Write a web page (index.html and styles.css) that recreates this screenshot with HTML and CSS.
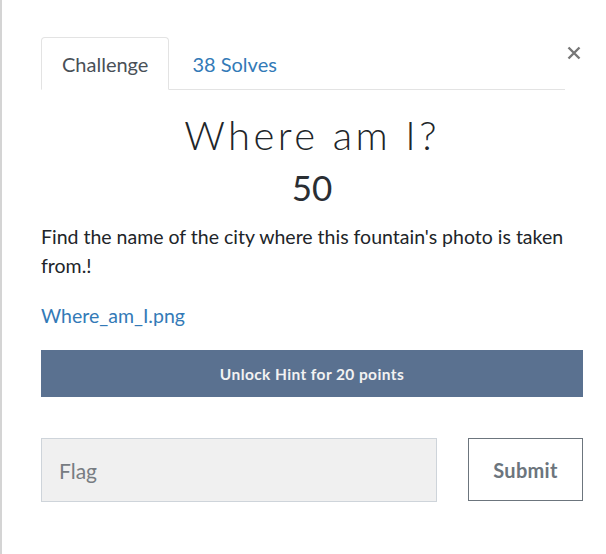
FILE: index.html
```html
<!DOCTYPE html>
<html>
<head>
<meta charset="utf-8">
<link rel="stylesheet" href="styles.css">
</head>
<body>
<div class="modal">
  <div class="modal-body">
    <div class="header">
      <ul class="tabs">
        <li class="tab active">Challenge</li>
        <li class="tab link">38 Solves</li>
      </ul>
      <button class="close" aria-label="Close">
        <svg width="14" height="14" viewBox="0 0 14 14"><path d="M1.5 1.5 L12.5 12.5 M12.5 1.5 L1.5 12.5" stroke="#777" stroke-width="2.4" stroke-linecap="butt"/></svg>
      </button>
    </div>
    <h2 class="title">Where am I?</h2>
    <h3 class="value">50</h3>
    <p class="desc">Find the name of the city where this fountain's photo is taken from.!</p>
    <a class="file" href="#">Where_am_I.png</a>
    <button class="hint">Unlock Hint for 20 points</button>
    <div class="submit-row">
      <input class="flag" type="text" placeholder="Flag">
      <button class="submit">Submit</button>
    </div>
  </div>
</div>
</body>
</html>
```
FILE: styles.css
```css
html, body {
  margin: 0;
  padding: 0;
  background: #fff;
}
body {
  font-family: "Lato", "Open Sans", sans-serif;
  color: #212529;
}
.modal {
  border-left: 2px solid #d4d4d4;
  height: 554px;
  box-sizing: border-box;
}
.modal-body {
  padding: 37px 23px 0 39px;
}
.header {
  display: flex;
  align-items: flex-start;
}
.tabs {
  flex: 1;
  display: flex;
  list-style: none;
  margin: 0;
  padding: 0;
  border-bottom: 1px solid #e3e3e3;
}
.tab {
  font-size: 20px;
  line-height: 26px;
  padding: 13px 20px 12px 20px;
  border: 1px solid transparent;
  border-radius: 4px 4px 0 0;
  margin-bottom: -1px;
}
.tab.active {
  color: #495057;
  border-color: #e3e3e3 #e3e3e3 #fff;
  background: #fff;
}
.tab.link {
  color: #337ab7;
  padding-left: 22px;
}
.close {
  background: none;
  border: 0;
  padding: 0;
  margin: 9px 2px 0 2px;
  width: 14px;
  height: 14px;
  display: flex;
}
.title {
  margin: 21px 0 0 0;
  text-align: center;
  font-weight: 300;
  font-size: 40px;
  line-height: 48px;
  letter-spacing: 3.4px;
  color: #212529;
}
.value {
  margin: 7px 0 0 0;
  text-align: center;
  font-weight: 400;
  font-size: 35px;
  line-height: 42px;
  color: #2a2e33;
}
.desc {
  margin: 14px 0 0 0;
  font-size: 19.5px;
  line-height: 29px;
}
.file {
  display: block;
  margin-top: 23px;
  font-size: 19.5px;
  line-height: 26px;
  color: #337ab7;
  text-decoration: none;
}
.hint {
  display: block;
  width: 100%;
  margin-top: 21px;
  height: 47px;
  border: 0;
  background: #5a7190;
  color: #f2f2f2;
  font-family: "Lato", sans-serif;
  font-weight: 700;
  font-size: 15.5px;
  letter-spacing: 0.4px;
}
.submit-row {
  display: flex;
  gap: 31px;
  margin-top: 41px;
}
.flag {
  flex: 1;
  height: 64px;
  box-sizing: border-box;
  border: 1px solid #ced4da;
  background: #f0f0f0;
  padding: 0 17px;
  font-family: "Lato", sans-serif;
  font-size: 21px;
  color: #495057;
}
.flag::placeholder {
  color: #777c82;
}
.submit {
  width: 115px;
  height: 63px;
  box-sizing: border-box;
  border: 1px solid #6c757d;
  background: #fff;
  color: #6c757d;
  font-family: "Lato", sans-serif;
  font-weight: 700;
  font-size: 20px;
  letter-spacing: 0.3px;
}
```
